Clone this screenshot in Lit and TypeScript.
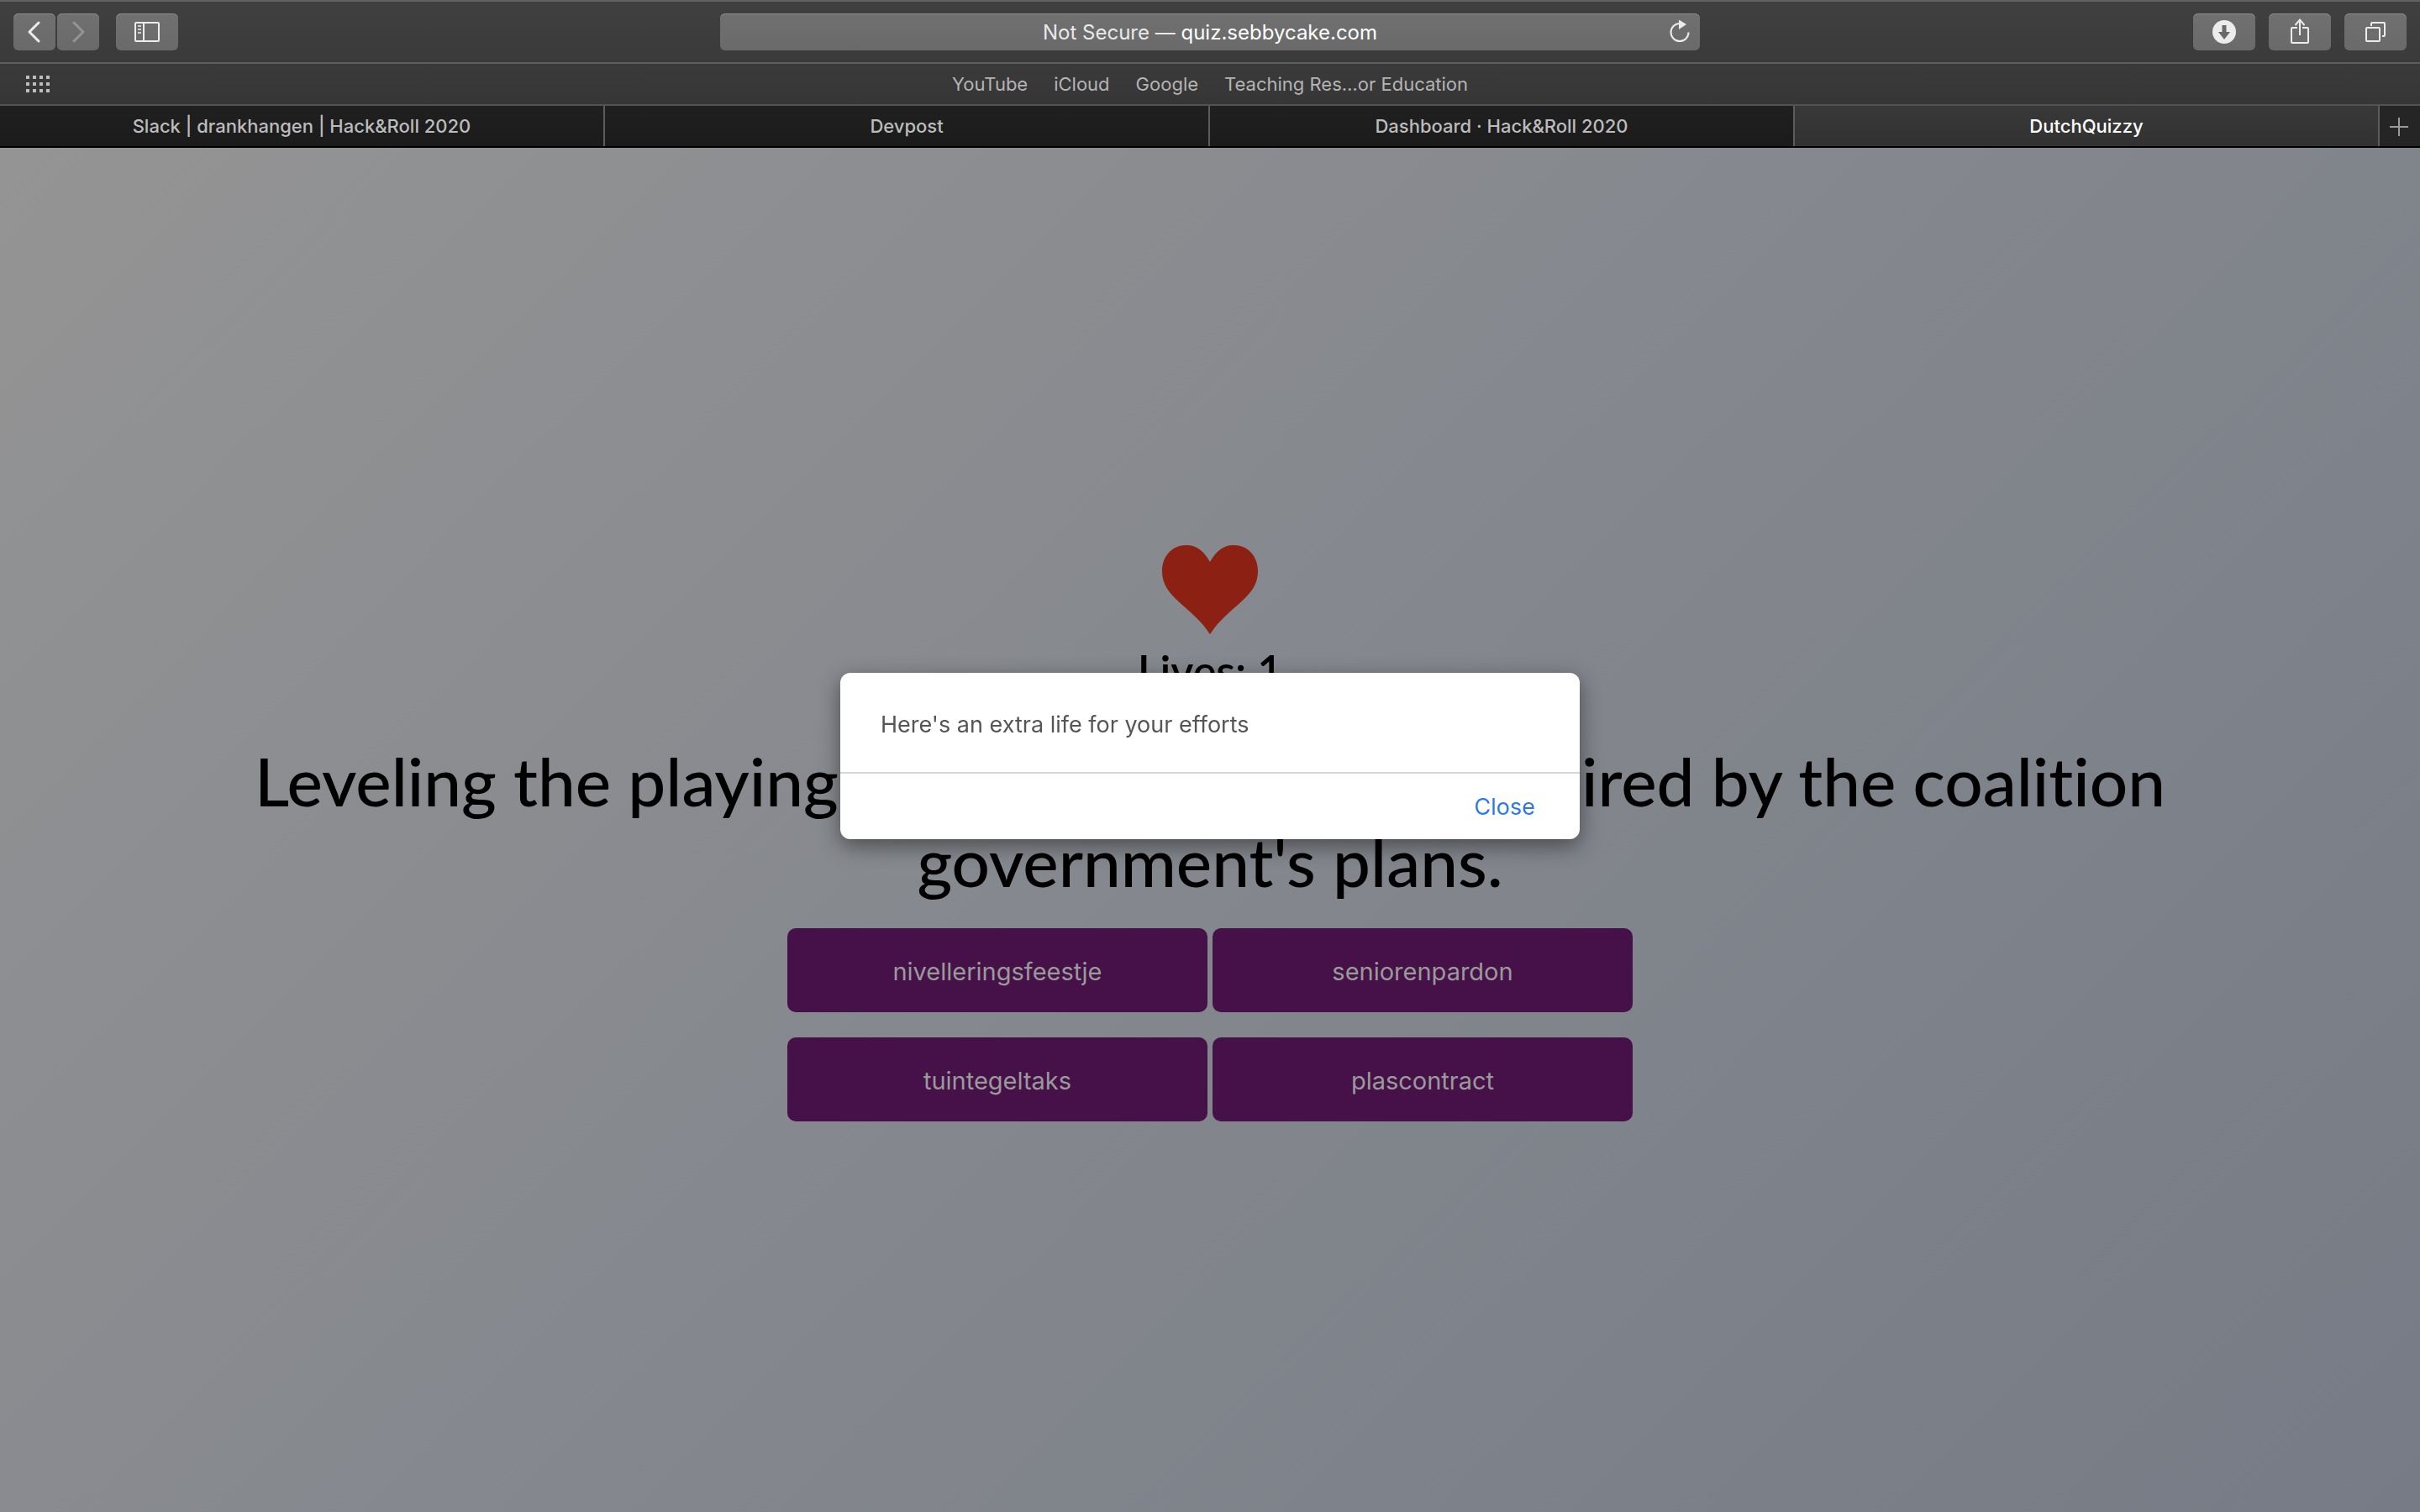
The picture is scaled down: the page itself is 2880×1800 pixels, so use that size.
import { LitElement, html, css, svg } from "lit";
import { customElement, state } from "lit/decorators.js";

@customElement("browser-chrome")
class BrowserChrome extends LitElement {
  static styles = css`
    :host { display: block; font-family: Inter, "Liberation Sans", sans-serif; }
    button { font: inherit; margin: 0; border: 0; padding: 0; }
    svg { display: block; }
    .bars { background: linear-gradient(#404040, #363636); border-top: 2px solid #626262; }
    .toolbar {
      display: grid; grid-template-columns: 1fr minmax(0, 1166px) 1fr; align-items: center;
      height: 72px; border-bottom: 2px solid #5e5e5e; padding: 0 16px;
    }
    .group { display: flex; align-items: center; }
    .right { justify-content: flex-end; gap: 16px; }
    .tool {
      width: 74px; height: 44px; border-radius: 6px; display: grid; place-items: center;
      background: linear-gradient(#707070, #6a6a6a); box-shadow: inset 0 1px #8a8a8a;
    }
    .nav { width: 50px; margin-right: 2px; }
    .side { margin-left: 18px; }
    .address {
      height: 44px; border-radius: 6px; display: flex; align-items: center; justify-content: center;
      background: linear-gradient(#707070, #6a6a6a); box-shadow: inset 0 1px #8a8a8a;
      font-size: 24px; line-height: 42px; color: #e9e9e9; position: relative; white-space: pre;
      padding-top: 2px; box-sizing: border-box;
    }
    .host { color: #fff; }
    .reload { position: absolute; right: 6px; top: 0; width: 36px; height: 44px; background: none; }
    .bookmarks {
      display: flex; align-items: center; justify-content: center; gap: 31px; height: 48px;
      border-bottom: 2px solid #525252; position: relative; font-size: 22px;
    }
    .bookmarks a { color: #b4b4b4; text-decoration: none; }
    .grid { position: absolute; left: 30px; top: 13px; background: none; }
    .tabs {
      display: grid; grid-template-columns: 25% 25% 1fr 1fr 48px; height: 48px;
      border-bottom: 2px solid #000; background: linear-gradient(#202020, #1b1b1b);
      font-size: 22px; font-weight: 500;
    }
    .tab { background: none; color: #bcbcbc; border-right: 2px solid #5c5c5c; cursor: pointer; }
    .tab.current { background: linear-gradient(#383838, #323232); color: #fff; }
    .plus { background: #252525; display: grid; place-items: center; }
  `;
  @state() tabs = ["Slack | drankhangen | Hack&Roll 2020", "Devpost", "Dashboard · Hack&Roll 2020", "DutchQuizzy"];
  @state() current = 3;
  render() {
    return html`
      <div class="bars">
        <div class="toolbar">
          <div class="group">
            <button class="tool nav" aria-label="Back"><svg width="50" height="44">
              <path d="M30 11 19 22 30 33" fill="none" stroke="#ececec" stroke-width="3" stroke-linecap="round" stroke-linejoin="round"/></svg></button>
            <button class="tool nav" aria-label="Forward"><svg width="50" height="44">
              <path d="M20 11 31 22 20 33" fill="none" stroke="#949494" stroke-width="3" stroke-linecap="round" stroke-linejoin="round"/></svg></button>
            <button class="tool side" aria-label="Sidebar"><svg width="74" height="44">
              <g fill="none" stroke="#ececec" stroke-width="2"><rect x="23" y="11" width="28" height="22" rx="1"/><path d="M33 11V33"/></g>
              <path d="M26 15H30M26 19H30M26 23H30" stroke="#d0d0d0" stroke-width="2"/></svg></button>
          </div>
          <div class="address"><span>Not Secure — </span><span class="host">quiz.sebbycake.com</span>
            <button class="reload" aria-label="Reload"><svg width="36" height="44">
              <path d="M18 12A10.500 10.500 0 1 0 28.500 22.500" fill="none" stroke="#ececec" stroke-width="2"/>
              <path d="M17 7.500 26 13 17 19Z" fill="#ececec"/></svg></button></div>
          <div class="group right">
            <button class="tool" aria-label="Downloads"><svg width="74" height="44">
              <circle cx="37" cy="22" r="14" fill="#ececec"/><path d="M34.500 14H39.500V22H44L37 31 30 22H34.500Z" fill="#6a6a6a"/></svg></button>
            <button class="tool" aria-label="Share"><svg width="74" height="44">
              <path d="M34 17H28Q27 17 27 18V34Q27 35 28 35H46Q47 35 47 34V18Q47 17 46 17H40M37 26V8M31.500 14 37 7.500 42.500 14" fill="none" stroke="#ececec" stroke-width="2"/></svg></button>
            <button class="tool" aria-label="Tab overview"><svg width="74" height="44">
              <path d="M32 15V12Q32 11 33 11H47Q48 11 48 12V26Q48 27 47 27H45" fill="none" stroke="#ececec" stroke-width="2"/>
              <rect x="26" y="17" width="16" height="16" rx="1" fill="none" stroke="#ececec" stroke-width="2"/></svg></button>
          </div>
        </div>
        <nav class="bookmarks">
          <button class="grid" aria-label="Favorites"><svg width="30" height="22">
            ${[0, 1, 2].map(r => [0, 1, 2, 3].map(c => svg`<rect x=${1 + c * 8} y=${1 + r * 8} width="4" height="4" fill="#bdbdbd"/>`))}</svg></button>
          <a href="#">YouTube</a><a href="#">iCloud</a><a href="#">Google</a><a href="#">Teaching Res…or Education</a>
        </nav>
      </div>
      <div class="tabs">
        ${this.tabs.map((t, i) => html`<button class="tab ${i === this.current ? "current" : ""}" @click=${() => (this.current = i)}>${t}</button>`)}
        <button class="plus" aria-label="New tab"><svg width="24" height="24"><path d="M11 2V24M0 13H22" stroke="#9a9a9a" stroke-width="2"/></svg></button>
      </div>`;
  }
}

@customElement("app-root")
class AppRoot extends LitElement {
  static styles = css`
    :host { display: flex; flex-direction: column; min-height: 100vh; font-family: Inter, "Liberation Sans", sans-serif; }
    .quiz {
      flex: 1; display: flex; flex-direction: column; align-items: center; justify-content: center;
      background: linear-gradient(135deg, #949494, #85888e 47%, #767b85);
      font-family: Lato, sans-serif; color: #000; text-align: center; font-variant-ligatures: none;
    }
    .heart { display: block; margin-top: 8px; }
    .lives { font-size: 52px; line-height: 62px; font-weight: 600; margin: 12px 0 52px; }
    .question { font-size: 80px; line-height: 96px; font-weight: 500; margin: 0 0 32px; width: 80%; }
    .answers { display: grid; grid-template-columns: 500px 500px; gap: 30px 6px; }
    .answer {
      height: 100px; border: 0; border-radius: 10px; background: #461149; color: #9a9a9a;
      padding: 2px 0 0; font: 400 29px Inter, "Liberation Sans", sans-serif;
    }
    .overlay { position: fixed; inset: 0; display: grid; place-items: center; }
    .dialog {
      width: 880px; background: #fff; border-radius: 12px; box-shadow: 0 8px 26px rgba(0, 0, 0, 0.45);
      display: flex; flex-direction: column;
    }
    .message { margin: 0; padding: 47px 48px 41px; font-size: 27px; line-height: 30px; color: #555; font-weight: 400; border-bottom: 2px solid #d4d4d4; }
    .close {
      align-self: flex-end; border: 0; background: none; color: #2b78f0; padding: 2px 53px 0;
      font: 400 27px/76px Inter, "Liberation Sans", sans-serif;
    }
  `;
  @state() open = true;
  answers = ["nivelleringsfeestje", "seniorenpardon", "tuintegeltaks", "plascontract"];
  render() {
    return html`
      <browser-chrome></browser-chrome>
      <main class="quiz">
        <svg class="heart" width="114" height="106" viewBox="0 0 114 106" role="img" aria-label="Heart">
          <path d="M57 20C50 7 41 0 29 0C12 0 0 13 0 31C0 63 35 72 57 106C79 72 114 63 114 31C114 13 102 0 85 0C73 0 64 7 57 20Z" fill="#8b2013"/></svg>
        <p class="lives">Lives: 1</p>
        <h1 class="question">Leveling the playing field with a banquet inspired by the coalition government's plans.</h1>
        <div class="answers">${this.answers.map(a => html`<button class="answer">${a}</button>`)}</div>
      </main>
      ${this.open ? html`<div class="overlay"><div class="dialog" role="dialog" aria-modal="true">
        <p class="message">Here's an extra life for your efforts</p>
        <button class="close" @click=${() => (this.open = false)}>Close</button>
      </div></div>` : ""}`;
  }
}
